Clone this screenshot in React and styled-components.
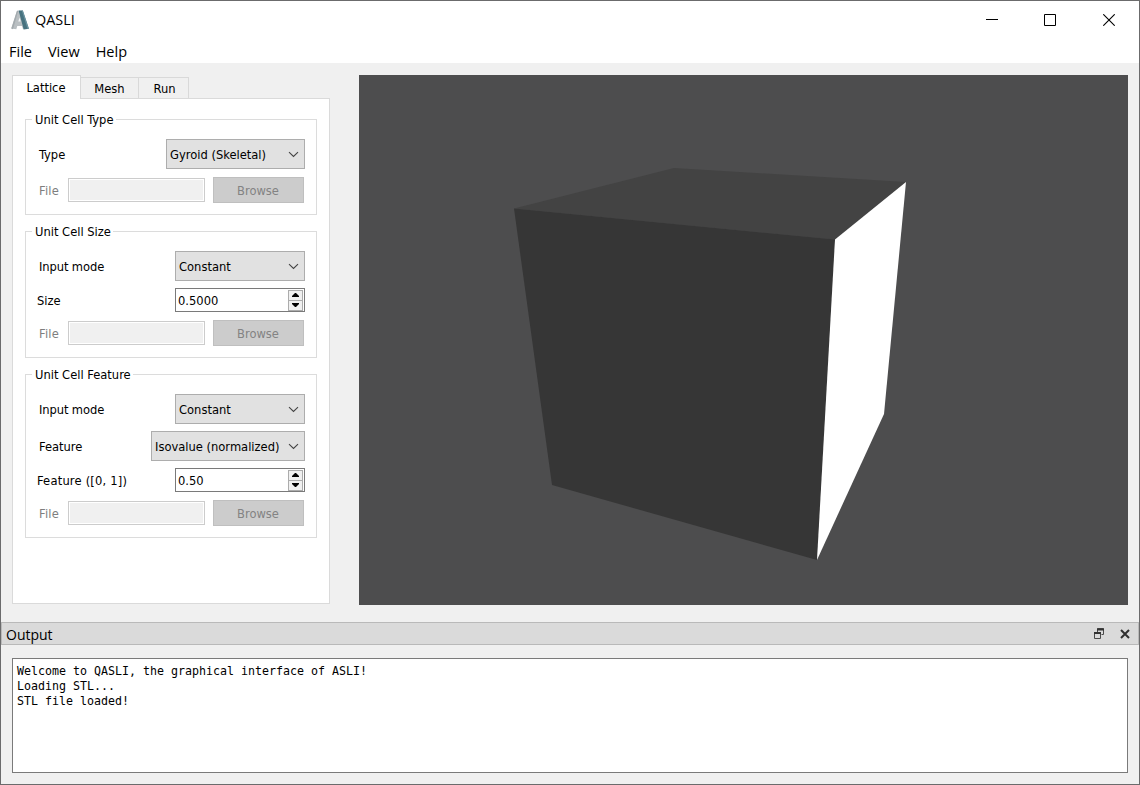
import React from "react";
import styled, { createGlobalStyle } from "styled-components";

const GlobalStyle = createGlobalStyle`
  * { box-sizing: border-box; }
  body { margin: 0; background: #f0f0f0; }
`;

const Window = styled.div`
  display: flex;
  flex-direction: column;
  width: 1140px;
  height: 785px;
  border: 1px solid #6b6b6c;
  background: #f0f0f0;
  color: #000;
  font: 12.8px/16px "DejaVu Sans Condensed", "DejaVu Sans", sans-serif;
`;

const TitleBar = styled.header`
  display: flex;
  align-items: center;
  justify-content: space-between;
  height: 37px;
  padding-left: 10px;
  background: #fff;
`;

const Title = styled.div`
  display: flex;
  align-items: center;
  gap: 6px;
  font: 14.4px/20px "Open Sans", "Noto Sans", sans-serif;
`;

const WindowButtons = styled.div`
  display: flex;
`;

const WindowButton = styled.button`
  display: grid;
  place-items: center;
  width: ${(p) => p.$width || 58}px;
  height: 36px;
  padding: 0;
  border: 0;
  background: none;
`;

const MenuBar = styled.nav`
  display: flex;
  gap: 16px;
  height: 25px;
  padding: 4px 8px 0;
  background: #fff;
  font: 14.5px/20px "Open Sans", "Noto Sans", sans-serif;
`;

const Workspace = styled.main`
  display: flex;
  gap: 29px;
  height: 559px;
  padding: 12px 11px 0;
`;

const Sidebar = styled.section`
  display: flex;
  flex-direction: column;
  width: 318px;
  height: 529px;
`;

const Tabs = styled.div`
  display: flex;
  align-items: flex-end;
  height: 24px;
  margin-bottom: -1px;
  z-index: 1;
`;

const Tab = styled.button`
  width: ${(p) => p.$width}px;
  height: ${(p) => (p.$active ? 24 : 21)}px;
  margin: 0 0 ${(p) => (p.$active ? 0 : 1)}px;
  padding: ${(p) => (p.$active ? "0 1px 0 0" : "1px 0 0")};
  border: 1px solid #d9d9d9;
  border-bottom: 0;
  border-left-width: ${(p) => (p.$active ? 1 : 0)}px;
  background: ${(p) => (p.$active ? "#fff" : "#f0f0f0")};
  color: #000;
  font: inherit;
`;

const RunTab = styled(Tab)`
  padding-left: 2px;
`;

const Pane = styled.div`
  display: flex;
  flex: 1;
  flex-direction: column;
  gap: 16px;
  padding: 20px 12px 0;
  border: 1px solid #dadada;
  background: #fff;
`;

const Group = styled.section`
  display: flex;
  flex-direction: column;
  padding: 0 11px 11px;
  border: 1px solid #dcdcdc;
`;

const GroupTitle = styled.h2`
  align-self: flex-start;
  margin: -8px 0 11px -5px;
  padding: 0 2px 0 3px;
  background: #fff;
  font: inherit;
`;

const Row = styled.div`
  display: flex;
  align-items: center;
  justify-content: space-between;
  margin-top: ${(p) => p.$gap || 0}px;
`;

const FileRow = styled(Row)`
  justify-content: flex-start;
  margin-top: 8px;
  color: #7e7e7e;
`;

const Label = styled.label`
  padding: 2px 0 0 ${(p) => (p.$outdent ? 0 : 2)}px;
  letter-spacing: ${(p) => p.$spacing || 0}px;
`;

const FileLabel = styled(Label)`
  width: 31px;
  letter-spacing: 0.2px;
`;

const Combo = styled.div`
  display: flex;
  align-items: center;
  justify-content: space-between;
  width: ${(p) => p.$width}px;
  height: 30px;
  padding: 0 5px 0 3px;
  border: 1px solid #adadad;
  background: #e1e1e1;
  white-space: nowrap;

  span { padding-top: 2px; }
`;

const SpinBox = styled.div`
  display: flex;
  align-items: center;
  justify-content: space-between;
  width: 130px;
  height: 24px;
  padding: 0 1px 0 2px;
  border: 1px solid #7a7a7a;
  background: #fff;

  span { padding-top: 2px; }
`;

const Steppers = styled.div`
  display: flex;
  flex-direction: column;
`;

const Stepper = styled.button`
  display: grid;
  place-items: center;
  width: 15px;
  height: ${(p) => (p.$down ? 10 : 11)}px;
  padding: 0;
  border: 1px solid #acacac;
  border-top-width: ${(p) => (p.$down ? 0 : 1)}px;
  background: #f0f0f0;
`;

const FileInput = styled.div`
  width: 137px;
  height: 24px;
  margin-right: 8px;
  border: 1px solid #cccccc;
  background: #f0f0f0;
  box-shadow: inset 0 0 0 1px #fff;
`;

const Browse = styled.button`
  width: 91px;
  height: 26px;
  padding: 2px 1px 0 0;
  border: 1px solid #bfbfbf;
  background: #cccccc;
  color: #838383;
  font: inherit;
`;

const Viewport = styled.section`
  width: 769px;
  height: 530px;
  background: #4d4d4e;

  svg { display: block; }
`;

const DockTitle = styled.header`
  display: flex;
  align-items: center;
  justify-content: space-between;
  height: 23px;
  padding: 1px 8px 0 4px;
  border: 1px solid #b9b9b9;
  background: #dadada;
  font: 14px/20px "Open Sans", "Noto Sans", sans-serif;

  > span { padding-top: 1px; }
`;

const DockButtons = styled.div`
  display: flex;
  align-items: center;
  gap: 16px;
  height: 20px;
`;

const Log = styled.pre`
  width: 1116px;
  height: 115px;
  margin: 13px 11px 0;
  padding: 5px 4px;
  border: 1px solid #7a7a7a;
  background: #fff;
  font: 11.63px/15px "DejaVu Sans Mono", monospace;
`;

const Logo = () => (
  <svg width="18" height="20" viewBox="0 0 18 20">
    <path d="M.3 18.500 6 .8h5.500l4.500 17.700-4 .8-1-3.300H6.300l-1 3.300z" fill="#b9bfc2" />
    <path d="M.3 18.500 6 .8l1.200.2L2 19.200z" fill="#a3aaae" />
    <path d="m7.300 11.500 1.300-4 1 4z" fill="#f4f6f7" />
    <path d="M7.600.6h4.200L17.900 18.800l-5.200.7z" fill="#47727f" />
    <path d="m10.700.6h1.100L17.900 18.800l-1.300.2z" fill="#6a93a0" />
  </svg>
);

const Chevron = () => (
  <svg width="11" height="7" viewBox="0 0 11 7">
    <path d="m1 1.200 4.500 4.300L10 1.200" fill="none" stroke="#444" strokeWidth="1.1" />
  </svg>
);

const Select = ({ width, children }) => (
  <Combo $width={width}>
    <span>{children}</span>
    <Chevron />
  </Combo>
);

const Spin = ({ children }) => (
  <SpinBox>
    <span>{children}</span>
    <Steppers>
      <Stepper>
        <svg width="7" height="4" viewBox="0 0 7 4"><path d="M3 0h1l3 3v1H0V3z" /></svg>
      </Stepper>
      <Stepper $down>
        <svg width="7" height="4" viewBox="0 0 7 4"><path d="M0 0h7v1L4 4H3L0 1z" /></svg>
      </Stepper>
    </Steppers>
  </SpinBox>
);

const FilePicker = () => (
  <FileRow>
    <FileLabel>File</FileLabel>
    <FileInput />
    <Browse disabled>Browse</Browse>
  </FileRow>
);

export default function App() {
  return (
    <Window>
      <GlobalStyle />
      <TitleBar>
        <Title><Logo />QASLI</Title>
        <WindowButtons>
          <WindowButton aria-label="Minimize">
            <svg width="12" height="12"><path d="M0 5.500h12" stroke="#000" /></svg>
          </WindowButton>
          <WindowButton aria-label="Maximize">
            <svg width="12" height="12"><path d="M.5.5h11v11H.5z" fill="none" stroke="#000" /></svg>
          </WindowButton>
          <WindowButton aria-label="Close" $width={60}>
            <svg width="12" height="12"><path d="m.3.3 11.400 11.400M11.700.3.3 11.700" stroke="#000" strokeWidth="1.1" /></svg>
          </WindowButton>
        </WindowButtons>
      </TitleBar>
      <MenuBar>
        <span>File</span>
        <span>View</span>
        <span>Help</span>
      </MenuBar>
      <Workspace>
        <Sidebar>
          <Tabs>
            <Tab $active $width={69}>Lattice</Tab>
            <Tab $width={58}>Mesh</Tab>
            <RunTab $width={50}>Run</RunTab>
          </Tabs>
          <Pane>
            <Group>
              <GroupTitle>Unit Cell Type</GroupTitle>
              <Row><Label>Type</Label><Select width={139}>Gyroid (Skeletal)</Select></Row>
              <FilePicker />
            </Group>
            <Group>
              <GroupTitle>Unit Cell Size</GroupTitle>
              <Row><Label $spacing={-0.1}>Input mode</Label><Select width={130}>Constant</Select></Row>
              <Row $gap={7}><Label $outdent>Size</Label><Spin>0.5000</Spin></Row>
              <FilePicker />
            </Group>
            <Group>
              <GroupTitle>Unit Cell Feature</GroupTitle>
              <Row><Label $spacing={-0.1}>Input mode</Label><Select width={130}>Constant</Select></Row>
              <Row $gap={7}><Label>Feature</Label><Select width={154}>Isovalue (normalized)</Select></Row>
              <Row $gap={7}><Label $outdent $spacing={0.2}>Feature ([0, 1])</Label><Spin>0.50</Spin></Row>
              <FilePicker />
            </Group>
          </Pane>
        </Sidebar>
        <Viewport>
          <svg width="769" height="530" viewBox="359 75 769 530">
            <path d="M514 208.500 674 168l232 14-71 57.500z" fill="#434343" />
            <path d="m514 208.500 321 31L817 560l-265-75z" fill="#363636" />
            <path d="m835 239.500 71-57.500-22 232-67 146z" fill="#fff" />
          </svg>
        </Viewport>
      </Workspace>
      <DockTitle>
        <span>Output</span>
        <DockButtons>
          <svg width="10" height="12" viewBox="0 0 10 12">
            <path d="M3.500 4.500v-4h6v6h-2" fill="none" stroke="#4a4a4a" />
            <path d="M3 1.500h7" stroke="#333" strokeWidth="2" />
            <path d="M.5 4.500h6v6h-6z" fill="#dadada" stroke="#4a4a4a" />
            <path d="M0 5h7" stroke="#333" strokeWidth="2" />
          </svg>
          <svg width="10" height="10" viewBox="0 0 10 10">
            <path d="m1 1 8 8M9 1 1 9" stroke="#303030" strokeWidth="2" />
          </svg>
        </DockButtons>
      </DockTitle>
      <Log>{"Welcome to QASLI, the graphical interface of ASLI!\nLoading STL...\nSTL file loaded!"}</Log>
    </Window>
  );
}
